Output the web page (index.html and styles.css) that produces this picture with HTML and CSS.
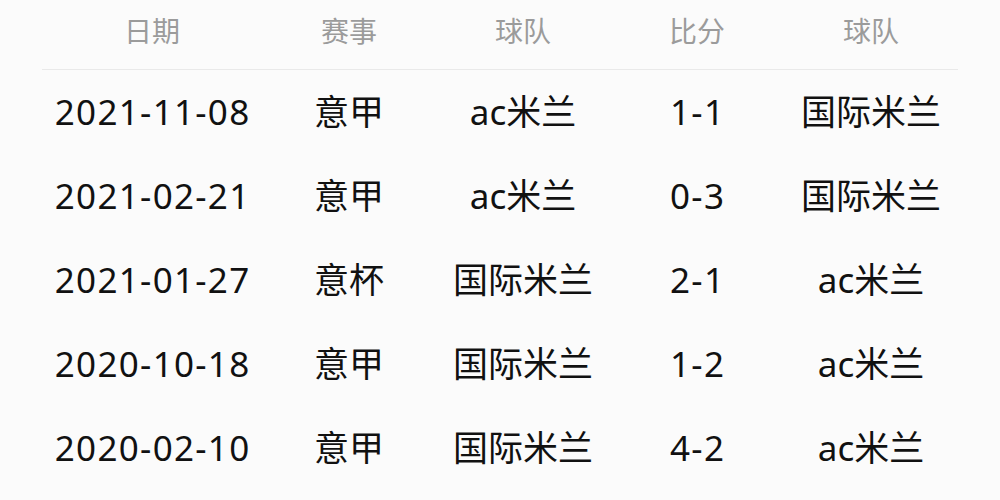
FILE: index.html
```html
<!DOCTYPE html>
<html lang="zh-CN">
<head>
<meta charset="utf-8">
<title>比赛记录</title>
<link rel="stylesheet" href="styles.css">
</head>
<body>
<div class="table">
  <div class="row head">
    <div>日期</div><div>赛事</div><div>球队</div><div>比分</div><div>球队</div>
  </div>
  <div class="row">
    <div class="num">2021-11-08</div><div>意甲</div><div>ac米兰</div><div class="num">1-1</div><div>国际米兰</div>
  </div>
  <div class="row">
    <div class="num">2021-02-21</div><div>意甲</div><div>ac米兰</div><div class="num">0-3</div><div>国际米兰</div>
  </div>
  <div class="row">
    <div class="num">2021-01-27</div><div>意杯</div><div>国际米兰</div><div class="num">2-1</div><div>ac米兰</div>
  </div>
  <div class="row">
    <div class="num">2020-10-18</div><div>意甲</div><div>国际米兰</div><div class="num">1-2</div><div>ac米兰</div>
  </div>
  <div class="row">
    <div class="num">2020-02-10</div><div>意甲</div><div>国际米兰</div><div class="num">4-2</div><div>ac米兰</div>
  </div>
</div>
</body>
</html>
```
FILE: styles.css
```css
html, body {
  margin: 0;
  padding: 0;
  background: #fbfbfb;
}
body {
  width: 1000px;
  height: 500px;
  overflow: hidden;
  font-family: "Noto Sans", "Noto Sans CJK SC", sans-serif;
  color: #111111;
}
.table {
  margin: 0 42px;
  width: 916px;
}
.row {
  display: grid;
  grid-template-columns: 220px 174px 174px 174px 174px;
  align-items: center;
  height: 84px;
  font-size: 35px;
  text-align: center;
  white-space: nowrap;
}
.row > div {
  line-height: 1;
  margin-top: -2px;
}
.row > .num {
  letter-spacing: 1.3px;
  text-indent: 1.3px;
}
.head {
  height: 69px;
  font-size: 28px;
  color: #9b9b9b;
  border-bottom: 1px solid #e9e9e9;
}
.head > div {
  margin-top: -7px;
}
```
